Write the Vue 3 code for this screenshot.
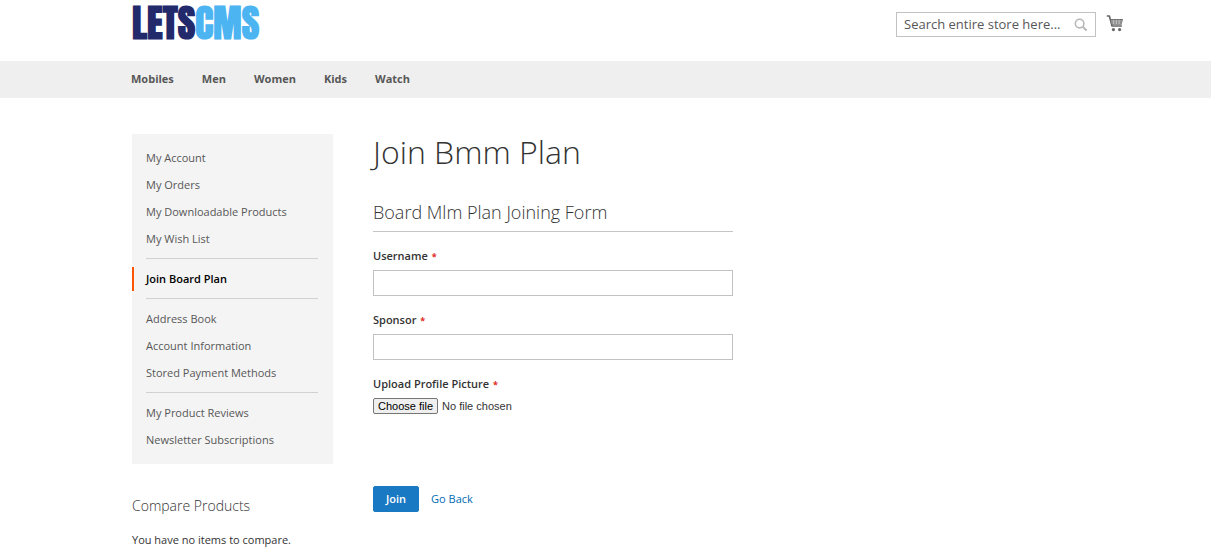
<script setup>
import { ref } from 'vue'

const search = ref('')
const username = ref('')
const sponsor = ref('')
const fileName = ref('No file chosen')

const categories = ['Mobiles', 'Men', 'Women', 'Kids', 'Watch']
const accountGroups = [
  ['My Account', 'My Orders', 'My Downloadable Products', 'My Wish List'],
  ['Join Board Plan'],
  ['Address Book', 'Account Information', 'Stored Payment Methods'],
  ['My Product Reviews', 'Newsletter Subscriptions'],
]
const current = 'Join Board Plan'

function onFile(event) {
  const file = event.target.files[0]
  fileName.value = file ? file.name : 'No file chosen'
}
</script>

<template>
  <div class="page">
    <header class="header">
      <a class="logo" href="#" aria-label="LETSCMS"><span>LETS</span><span class="logo-light">CMS</span></a>
      <div class="tools">
        <form class="search" role="search" @submit.prevent>
          <input v-model="search" type="text" aria-label="Search" placeholder="Search entire store here..." />
          <button type="submit" aria-label="Search">
            <svg width="14" height="14" viewBox="0 0 14 14" fill="none" stroke="#b8b8b8">
              <circle cx="5.6" cy="5.6" r="4.3" stroke-width="1.6" />
              <path d="M8.8 8.8 L12.6 12.4" stroke-width="2" />
            </svg>
          </button>
        </form>
        <a class="cart" href="#" aria-label="My Cart">
          <svg width="18" height="18" viewBox="0 0 18 18">
            <path d="M1.4 2 H3.4 L6 12 H15.4" fill="none" stroke="#666" stroke-width="1.6" stroke-linecap="round" stroke-linejoin="round" />
            <path d="M3.8 5 H17 L15.6 10.8 H5.4 Z" fill="#707070" />
            <path d="M5 7 H16 M5.4 9 H15.6 M7.6 5.8 V10 M10.4 5.8 V10 M13.2 5.8 V10" stroke="#d5d5d5" stroke-width="0.7" />
            <circle cx="7.4" cy="15.6" r="1.6" fill="#666" />
            <circle cx="13.6" cy="15.6" r="1.6" fill="#666" />
          </svg>
        </a>
      </div>
    </header>

    <nav class="nav" aria-label="Categories">
      <a v-for="item in categories" :key="item" href="#">{{ item }}</a>
    </nav>

    <div class="columns">
      <aside class="sidebar">
        <nav class="account" aria-label="Account">
          <ul v-for="(group, i) in accountGroups" :key="i">
            <li v-for="item in group" :key="item">
              <a href="#" :class="{ current: item === current }">{{ item }}</a>
            </li>
          </ul>
        </nav>
        <section class="compare">
          <h2>Compare Products</h2>
          <p>You have no items to compare.</p>
        </section>
      </aside>

      <main class="main">
        <h1>Join Bmm Plan</h1>
        <form class="form" @submit.prevent>
          <h2>Board Mlm Plan Joining Form</h2>
          <div class="field">
            <label for="username">Username <span class="star">*</span></label>
            <input id="username" v-model="username" type="text" />
          </div>
          <div class="field">
            <label for="sponsor">Sponsor <span class="star">*</span></label>
            <input id="sponsor" v-model="sponsor" type="text" />
          </div>
          <div class="field">
            <label for="picture">Upload Profile Picture <span class="star">*</span></label>
            <div class="file">
              <input id="picture" type="file" @change="onFile" />
              <label class="file-button" for="picture">Choose file</label>
              <span>{{ fileName }}</span>
            </div>
          </div>
          <div class="actions">
            <button type="submit">Join</button>
            <a href="#">Go Back</a>
          </div>
        </form>
      </main>
    </div>
  </div>
</template>

<style>
body {
  background: #fff;
}
</style>

<style scoped>
.page {
  color: #333;
  font-family: "Open Sans", sans-serif;
  font-size: 11px;
  line-height: 16px;
}
.page * {
  box-sizing: border-box;
}
a {
  text-decoration: none;
}
.header {
  display: flex;
  justify-content: space-between;
  align-items: flex-start;
  height: 61px;
  padding: 0 87px 0 132px;
}
.logo {
  color: #232a6c;
  font-family: Impact, Anton, "Liberation Sans Narrow", "Roboto Condensed", Roboto, sans-serif;
  font-size: 38px;
  font-weight: 700;
  line-height: 46px;
}
.logo-light {
  color: #4db4f2;
}
.tools {
  display: flex;
  gap: 10px;
  padding-top: 12px;
}
.search {
  display: flex;
  align-items: center;
  width: 200px;
  height: 25px;
  border: 1px solid #c2c2c2;
}
.search input {
  flex: 1;
  min-width: 0;
  padding: 0 0 2px 7px;
  border: 0;
  outline: 0;
  background: none;
  color: #333;
  font: 13px "Open Sans", sans-serif;
}
.search input::placeholder {
  color: #575757;
  opacity: 1;
}
.search button {
  display: flex;
  padding: 0 7px;
  border: 0;
  background: none;
}
.cart {
  display: flex;
  padding-top: 2px;
}
.nav {
  display: flex;
  align-items: center;
  gap: 28px;
  height: 37px;
  padding: 0 87px 2px 131px;
  background: #efefef;
}
.nav a {
  color: #575757;
  font-weight: 700;
}
.columns {
  display: flex;
  gap: 40px;
  padding: 36px 87px 0 132px;
}
.sidebar {
  flex: 0 0 201px;
}
.account {
  padding: 12px 0;
  background: #f4f4f4;
}
.account ul {
  margin: 0;
  padding: 0;
  list-style: none;
}
.account ul + ul::before {
  content: "";
  display: block;
  margin: 7px 15px 8px 14px;
  border-top: 1px solid #d1d1d1;
}
.account li {
  padding-bottom: 3px;
}
.account li:last-child {
  padding-bottom: 0;
}
.account a {
  display: block;
  padding: 4px 14px;
  color: #575757;
}
.account .current {
  padding-left: 12px;
  border-left: 2px solid #ff5501;
  color: #000;
  font-weight: 600;
}
.compare {
  padding-top: 32px;
}
.compare h2 {
  margin: 0 0 16px;
  font-size: 14px;
  font-weight: 300;
  line-height: 20px;
}
.compare p {
  margin: 0;
}
.main {
  flex: 1;
}
h1 {
  margin: 0;
  font-size: 32px;
  font-weight: 300;
  line-height: 36px;
}
.form {
  width: 360px;
  max-width: 100%;
  padding-top: 30px;
}
.form h2 {
  margin: 0 0 16px;
  padding-bottom: 7px;
  border-bottom: 1px solid #c5c5c5;
  font-size: 18px;
  font-weight: 300;
  line-height: 24px;
}
.field {
  margin-bottom: 16px;
}
.field > label {
  display: block;
  margin-bottom: 6px;
  font-weight: 600;
}
.star {
  margin-left: 1px;
  color: #e02b27;
  font-size: 9px;
  font-weight: 700;
  line-height: 10px;
}
.field > input {
  display: block;
  width: 100%;
  height: 26px;
  padding: 0 7px;
  border: 1px solid #c2c2c2;
  font: 11px "Open Sans", sans-serif;
}
.file {
  display: flex;
  align-items: center;
  gap: 4px;
  font-family: "Liberation Sans", Arial, sans-serif;
}
.file input {
  position: absolute;
  width: 1px;
  height: 1px;
  opacity: 0;
}
.file-button {
  padding: 0 4px;
  border: 1px solid #767676;
  border-radius: 2px;
  background: #efefef;
  color: #000;
  line-height: 14px;
}
.actions {
  display: flex;
  align-items: center;
  gap: 12px;
  padding-top: 56px;
}
.actions button {
  height: 26px;
  padding: 0 12px 1px;
  border: 1px solid #1979c3;
  border-radius: 2px;
  background: #1979c3;
  color: #fff;
  font: 600 11px "Open Sans", sans-serif;
}
.actions a {
  color: #006bb4;
}
</style>
